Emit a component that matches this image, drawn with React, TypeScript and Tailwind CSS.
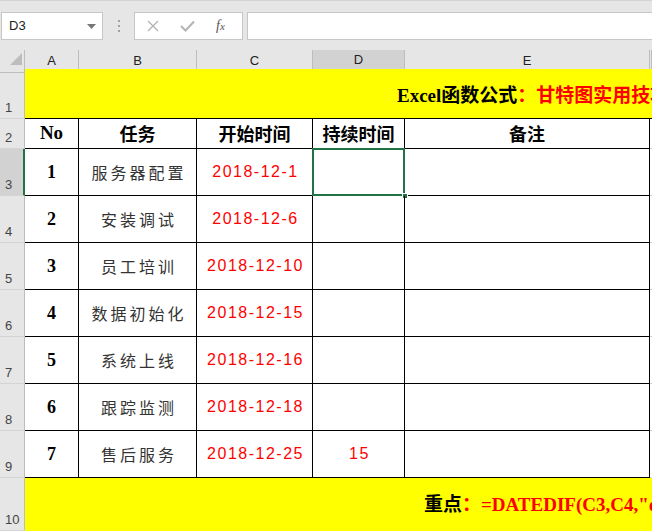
const cols = "grid grid-cols-[25px_54px_118px_116px_92px_245px_1fr]"

const rows = [
  { no: "1", task: "服务器配置", start: "2018-12-1", dur: "" },
  { no: "2", task: "安装调试", start: "2018-12-6", dur: "" },
  { no: "3", task: "员工培训", start: "2018-12-10", dur: "" },
  { no: "4", task: "数据初始化", start: "2018-12-15", dur: "" },
  { no: "5", task: "系统上线", start: "2018-12-16", dur: "" },
  { no: "6", task: "跟踪监测", start: "2018-12-18", dur: "" },
  { no: "7", task: "售后服务", start: "2018-12-25", dur: "15" },
]

const ui = "font-['Segoe_UI','Liberation_Sans',sans-serif]"
const serif = "font-['Liberation_Serif','Noto_Sans_CJK_SC',serif]"
const cjk = "font-['Noto_Sans_CJK_SC',sans-serif]"

function RowHead({ n, active, h }: { n: string; active?: boolean; h: string }) {
  return (
    <div
      className={`${h} flex items-end pl-[5px] pb-[1px] text-[13px] text-[#444] ${ui} border-b border-[#d4d4d4] ${
        active ? "bg-[#d2d2d2] border-r-2 border-r-[#217346]" : "bg-[#e6e6e6] border-r border-r-[#bdbdbd]"
      }`}
    >
      {n}
    </div>
  )
}

function FormulaBar() {
  return (
    <div className="h-[50px] bg-[#e6e6e6] border-t border-[#d4d4d4] flex items-start pt-[11px] pl-[1px]">
      <div className="w-[102px] h-[28px] bg-white border border-[#c6c6c6] flex items-center justify-between pl-[7px] pr-[6px]">
        <span className={`text-[13px] text-[#222] ${ui}`}>D3</span>
        <svg width="9" height="5" viewBox="0 0 9 5">
          <path d="M0 0 L9 0 L4.5 5 Z" fill="#777" />
        </svg>
      </div>
      <div className="w-[31px] h-[28px] flex flex-col items-center justify-center gap-[3px]">
        <span className="w-[2px] h-[2px] bg-[#a0a0a0]" />
        <span className="w-[2px] h-[2px] bg-[#a0a0a0]" />
        <span className="w-[2px] h-[2px] bg-[#a0a0a0]" />
      </div>
      <div className="w-[109px] h-[28px] bg-white border border-[#c6c6c6] flex items-center pl-[12px] gap-[21px]">
        <svg width="12" height="12" viewBox="0 0 12 12">
          <path d="M1 1 L11 11 M11 1 L1 11" stroke="#b4b4b4" strokeWidth="1.4" />
        </svg>
        <svg width="15" height="12" viewBox="0 0 15 12">
          <path d="M1 6 L5.5 10.5 L14 1.5" stroke="#b4b4b4" strokeWidth="2" fill="none" />
        </svg>
        <span className={`text-[14px] italic text-[#555] ${serif} leading-none`}>
          f<span className="text-[11px]">x</span>
        </span>
      </div>
      <div className="ml-[4px] flex-1 h-[28px] bg-white border border-[#c6c6c6] border-r-0" />
    </div>
  )
}

function ColumnHeaders() {
  const letters = ["A", "B", "C", "D", "E", ""]
  return (
    <div className={`${cols} h-[19px] bg-[#e6e6e6]`}>
      <div className="relative border-r border-b border-[#bdbdbd]">
        <svg className="absolute left-[10px] top-[3px]" width="12" height="12" viewBox="0 0 12 12">
          <path d="M12 0 L12 12 L0 12 Z" fill="#bdbdbd" />
        </svg>
      </div>
      {letters.map((l, i) =>
        l === "D" ? (
          <div
            key={i}
            className={`bg-[#d2d2d2] border-r border-[#bdbdbd] border-b-2 border-b-[#217346] flex items-end pb-[1px] justify-center text-[13px] text-[#222] ${ui}`}
          >
            {l}
          </div>
        ) : (
          <div
            key={i}
            className={`border-r border-b border-[#bdbdbd] flex items-end pb-[1px] justify-center text-[13px] text-[#222] ${ui}`}
          >
            {l}
          </div>
        ),
      )}
    </div>
  )
}

export default function App() {
  const cell = "border-r border-b border-black flex items-center justify-center"
  return (
    <div className="w-[652px] h-[531px] overflow-hidden bg-white">
      <FormulaBar />
      <ColumnHeaders />

      {/* row 1: title */}
      <div className={`${cols} h-[50px]`}>
        <RowHead n="1" h="h-[50px]" />
        <div className="col-span-6 bg-[#ffff00] border-b border-black flex items-end pb-[8px] pl-[372px] whitespace-nowrap overflow-hidden">
          <span className={`text-[19px] font-bold text-black ${serif}`}>Excel函数公式</span>
          <span className={`text-[19px] font-bold text-[#ff0000] ${serif}`}>：甘特图实用技巧</span>
        </div>
      </div>

      {/* row 2: headers */}
      <div className={`${cols} h-[30px]`}>
        <RowHead n="2" h="h-[30px]" />
        <div className={`${cell} text-[19px] font-bold ${serif}`}>No</div>
        <div className={`${cell} text-[18px] font-bold ${cjk}`}>任务</div>
        <div className={`${cell} text-[18px] font-bold ${cjk}`}>开始时间</div>
        <div className={`${cell} text-[18px] font-bold ${cjk}`}>持续时间</div>
        <div className={`${cell} text-[18px] font-bold ${cjk}`}>备注</div>
        <div className="border-b border-[#d4d4d4]" />
      </div>

      {rows.map((r, i) => (
        <div key={r.no} className={`${cols} h-[47px]`}>
          <RowHead n={String(i + 3)} h="h-[47px]" active={i === 0} />
          <div className={`${cell} text-[18px] font-bold ${serif}`}>{r.no}</div>
          <div className={`${cell} text-[16px] tracking-[3px] pl-[3px] text-[#333] ${cjk}`}>{r.task}</div>
          <div className={`${cell} text-[16px] tracking-[1.5px] pl-[2px] text-[#ff0000] ${ui}`}>{r.start}</div>
          <div className={`${cell} relative text-[16px] tracking-[1.5px] pl-[2px] text-[#ff0000] ${ui}`}>
            {r.dur}
            {i === 0 && (
              <>
                <div className="absolute -left-[1px] -top-[1px] right-[-1px] bottom-[-1px] border-2 border-[#217346]" />
                <div className="absolute right-[-4px] bottom-[-4px] w-[6px] h-[6px] bg-[#217346] border border-white" />
              </>
            )}
          </div>
          <div className={cell} />
          <div className="border-b border-[#d4d4d4]" />
        </div>
      ))}

      {/* row 10: key formula */}
      <div className={`${cols} h-[60px]`}>
        <RowHead n="10" h="h-[53px]" />
        <div className="col-span-6 h-[53px] bg-[#ffff00] flex items-center pl-[399px] pt-[1px] whitespace-nowrap overflow-hidden">
          <span className={`text-[19px] font-bold text-black ${serif}`}>重点</span>
          <span className={`text-[19px] font-bold text-[#ff0000] ${serif}`}>：=DATEDIF(C3,C4,"d")</span>
        </div>
      </div>
    </div>
  )
}
